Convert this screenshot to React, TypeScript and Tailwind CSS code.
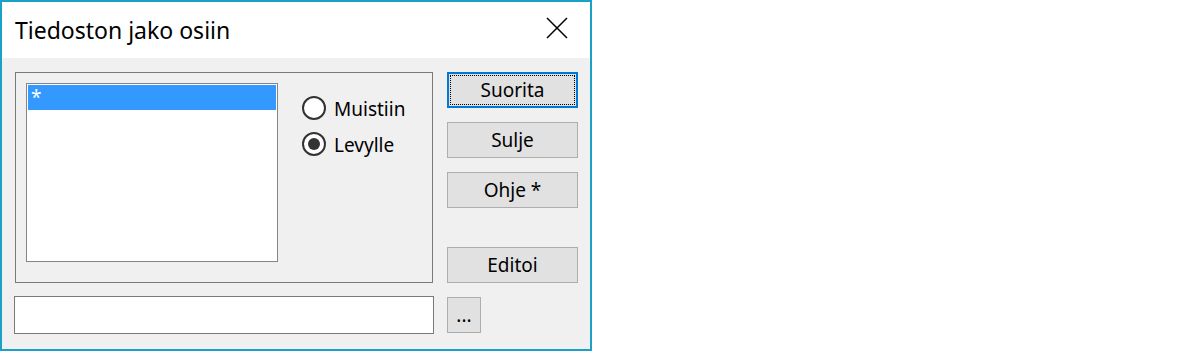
import React from "react";

const font = { fontFamily: '"Noto Sans", "Open Sans", sans-serif' };

function Button({ label, focused = false, className = "" }: { label: string; focused?: boolean; className?: string }) {
  return (
    <button
      className={`relative flex items-center justify-center bg-[#e1e1e1] text-[19px] leading-none text-black ${
        focused ? "border-2 border-[#0078d7]" : "border border-[#adadad]"
      } ${className}`}
    >
      {focused && <span className="absolute inset-[1px] border border-dotted border-black" />}
      <span className="relative">{label}</span>
    </button>
  );
}

function Radio({ label, checked = false }: { label: string; checked?: boolean }) {
  return (
    <label className="flex items-center gap-[8px] text-[19px] leading-none text-black">
      <span className="flex h-[24px] w-[24px] items-center justify-center rounded-full border-2 border-[#333333] bg-white">
        {checked && <span className="h-[12px] w-[12px] rounded-full bg-[#333333]" />}
      </span>
      <span className="mt-[3px]">{label}</span>
    </label>
  );
}

export default function App() {
  return (
    <div className="h-[351px] w-[1200px] bg-white" style={font}>
      <div className="flex h-[351px] w-[592px] flex-col border-2 border-[#1ba1c6]">
        {/* title bar */}
        <div className="flex h-[56px] shrink-0 items-center justify-between bg-white pl-[13px] pr-[22px]">
          <span className="mt-[1px] text-[23px] text-black">Tiedoston jako osiin</span>
          <svg width="22" height="22" viewBox="0 0 22 22" className="mt-[-5px]">
            <path d="M1 1L21 21M21 1L1 21" stroke="#000" strokeWidth="1.5" fill="none" />
          </svg>
        </div>

        {/* body */}
        <div className="flex flex-1 flex-col bg-[#f0f0f0] pl-[13px] pt-[14px]">
          <div className="flex gap-[14px]">
            <div className="flex h-[211px] w-[418px] border border-[#7a7a7a] pl-[10px] pt-[10px]">
              <div className="h-[179px] w-[252px] border border-[#82838e] bg-white p-[1px]">
                <div className="h-[25px] bg-[#3399ff] pl-[3px] text-[19px] leading-[24px] text-white">*</div>
              </div>
              <div className="ml-[24px] flex flex-col gap-[12px] pt-[13px]">
                <Radio label="Muistiin" />
                <Radio label="Levylle" checked />
              </div>
            </div>

            <div className="flex flex-col">
              <Button label="Suorita" focused className="h-[36px] w-[131px]" />
              <Button label="Sulje" className="mt-[14px] h-[36px] w-[131px]" />
              <Button label="Ohje *" className="mt-[14px] h-[36px] w-[131px]" />
              <Button label="Editoi" className="mt-[39px] h-[36px] w-[131px]" />
            </div>
          </div>

          <div className="mt-[13px] flex items-start gap-[13px]">
            <div className="-ml-[1px] h-[38px] w-[420px] border border-[#7a7a7a] bg-white" />
            <Button label="..." className="mt-[1px] h-[36px] w-[34px]" />
          </div>
        </div>
      </div>
    </div>
  );
}
